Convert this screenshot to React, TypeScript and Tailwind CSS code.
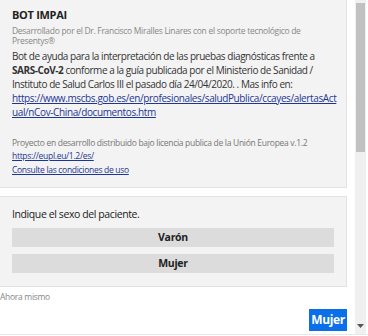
import React from 'react'

export default function App() {
  return (
    <div
      className="relative w-[368px] h-[336px] overflow-hidden bg-white flex"
      style={{ fontFamily: '"Open Sans", "Noto Sans", sans-serif' }}
    >
      {/* chat history */}
      <div className="w-[347px] flex flex-col">
        {/* bot card */}
        <div className="-mt-[6px] h-[194px] bg-[#f3f3f3] border border-l-0 border-[#e3e3e3] pl-3 pr-2 pt-[13px] text-[#333]">
          <div className="text-[11px] font-bold text-[#222] leading-[14px] tracking-[-0.3px]">BOT IMPAI</div>
          <div className="mt-[4px] text-[8.5px] leading-[10px] text-[#888] tracking-[-0.3px]">
            Desarrollado por el Dr. Francisco Miralles Linares con el soporte tecnológico de Presentys®
          </div>
          <p className="mt-[3px] text-[10px] leading-[14px] tracking-[-0.45px]">
            Bot de ayuda para la interpretación de las pruebas diagnósticas frente a{' '}
            <strong>SARS-CoV-2</strong> conforme a la guía publicada por el Ministerio de Sanidad /
            Instituto de Salud Carlos III el pasado día 24/04/2020. . Mas info en:
            <a className="block underline text-[#1d3593] break-all tracking-[-0.38px]">
              https://www.mscbs.gob.es/en/profesionales/saludPublica/ccayes/alertasActual/nCov-China/documentos.htm
            </a>
          </p>
          <div className="mt-[17px] text-[8.5px] leading-[13px] text-[#777] tracking-[-0.3px]">
            Proyecto en desarrollo distribuido bajo licencia publica de la Unión Europea v.1.2
          </div>
          <a className="block text-[8.5px] leading-[13px] underline text-[#1d3593] tracking-[-0.3px]">
            https://eupl.eu/1.2/es/
          </a>
          <a className="block mt-[1px] text-[8.5px] leading-[13px] underline text-[#1d3593] tracking-[-0.3px]">
            Consulte las condiciones de uso
          </a>
        </div>

        {/* question card */}
        <div className="mt-[8px] h-[91px] bg-[#f3f3f3] border border-l-0 border-[#e3e3e3] pl-3 pr-3 pt-[10px] text-[#222]">
          <div className="text-[10.5px] leading-[14px] tracking-[-0.4px]">Indique el sexo del paciente.</div>
          <div className="mt-[7px] flex flex-col gap-[7px]">
            <button className="h-[19px] bg-[#dcdcdc] text-[10.5px] font-bold text-[#222] tracking-[-0.3px]">Varón</button>
            <button className="h-[19px] bg-[#dcdcdc] text-[10.5px] font-bold text-[#222] tracking-[-0.3px]">Mujer</button>
          </div>
        </div>

        <div className="mt-[4px] text-[8.5px] leading-[12px] text-[#888] tracking-[-0.3px]">Ahora mismo</div>

        <div className="mt-[6px] flex justify-end">
          <div className="h-[22px] w-[38px] flex items-center justify-center bg-[#0a6fe8] text-white text-[12px] font-bold tracking-[-0.4px]">
            Mujer
          </div>
        </div>
      </div>

      {/* scrollbar */}
      <div className="ml-[8px] w-[11px] h-[334px] bg-[#f0f0f0] flex flex-col items-center pt-[3px]">
        <div className="w-[9px] h-[149px] bg-[#c1c1c1]" />
        <div className="flex-1" />
        <svg width="7" height="4" viewBox="0 0 7 4" className="mb-[6px]">
          <path d="M0 0 L7 0 L3.5 4 Z" fill="#555" />
        </svg>
      </div>
      <div className="absolute left-0 right-0 bottom-[1px] h-px bg-[#e8e8e8]" />
    </div>
  )
}
